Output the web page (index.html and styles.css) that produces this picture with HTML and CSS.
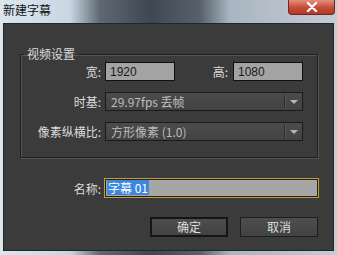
FILE: index.html
```html
<!DOCTYPE html>
<html lang="zh-CN">
<head>
  <meta charset="UTF-8">
  <title>新建字幕</title>
  <link rel="stylesheet" href="styles.css">
</head>
<body>
  <div class="titlebar">
    <span class="title">新建字幕</span>
    <button class="close">
      <svg width="12" height="10" viewBox="0 0 12 10">
        <path d="M2 1 L10 9 M10 1 L2 9" stroke="#fff" stroke-width="2.4" stroke-linecap="round"/>
      </svg>
    </button>
  </div>
  <div class="client">
    <fieldset class="group">
      <legend>视频设置</legend>
      <div class="row">
        <label class="label">宽:</label>
        <input class="field small" type="text" value="1920">
        <label class="label short">高:</label>
        <input class="field small" type="text" value="1080">
      </div>
      <div class="row">
        <label class="label">时基:</label>
        <div class="select">
          <span class="select-text">29.97fps 丢帧</span>
          <span class="select-arrow"></span>
        </div>
      </div>
      <div class="row">
        <label class="label">像素纵横比:</label>
        <div class="select">
          <span class="select-text">方形像素 (1.0)</span>
          <span class="select-arrow"></span>
        </div>
      </div>
    </fieldset>
    <div class="row name-row">
      <label class="label">名称:</label>
      <div class="field name"><span class="selected">字幕 01</span></div>
    </div>
    <div class="buttons">
      <button class="btn default">确定</button>
      <button class="btn">取消</button>
    </div>
  </div>
</body>
</html>
```

FILE: styles.css
```css
body {
  margin: 0;
  width: 337px;
  height: 255px;
  overflow: hidden;
  font-family: "Noto Sans CJK SC", "Liberation Sans", sans-serif;
  font-size: 12px;
  background: linear-gradient(90deg, #dbe6ef 0px, #c9d6e2 70px, #5d6872 100px, #3e4852 150px, #56616b 200px, #a9b5c0 230px, #c4cdd6 337px);
}

.titlebar {
  height: 23px;
  display: flex;
  justify-content: space-between;
  align-items: flex-start;
}

.title {
  margin: 2px 0 0 3px;
  color: #111;
  font-size: 12px;
  line-height: 16px;
}

.close {
  width: 47px;
  height: 15px;
  margin-right: 2px;
  padding: 0;
  border: 1px solid #6c2a22;
  border-top: none;
  border-radius: 0 0 4px 4px;
  background: linear-gradient(#e5907f, #c7503a 50%, #b33a25);
  display: flex;
  align-items: center;
  justify-content: center;
}

.client {
  margin: 0 3px;
  height: 228px;
  box-sizing: border-box;
  background: #3b3b3b;
  border: 1px solid #262626;
  color: #dcdcdc;
}

.group {
  margin: 23px 15px 0 16px;
  padding: 0 0 16px 0;
  border: 1px solid #1f1f1f;
  box-shadow: 1px 1px 0 #555, inset 1px 1px 0 #555;
}

.group legend {
  margin-left: 3px;
  padding: 0 3px;
  font-size: 12px;
  line-height: 14px;
  color: #dcdcdc;
}

.row {
  display: flex;
  align-items: center;
  height: 19px;
  margin-top: 11px;
}

.group .row:first-of-type {
  margin-top: 1px;
}

.label {
  width: 80px;
  margin-right: 4px;
  text-align: right;
  white-space: nowrap;
}

.label.short {
  width: 53px;
  margin-right: 5px;
}

.field {
  box-sizing: border-box;
  height: 19px;
  padding: 0 4px;
  border: 1px solid #111;
  background: #a3a3a3;
  color: #1a1a1a;
  font-family: "Liberation Sans", sans-serif;
  font-size: 12px;
  outline: none;
}

.field.small {
  width: 70px;
}

.select {
  box-sizing: border-box;
  width: 198px;
  height: 19px;
  border: 1px solid #1a1a1a;
  background: linear-gradient(#4b4b4b, #434343);
  display: flex;
  align-items: center;
}

.select-text {
  flex: 1;
  padding-left: 5px;
  color: #bdbdbd;
  font-size: 12px;
}

.select-arrow {
  width: 17px;
  height: 13px;
  border-left: 1px solid #2a2a2a;
  box-shadow: inset 1px 0 0 #5a5a5a;
  position: relative;
}

.select-arrow::after {
  content: "";
  position: absolute;
  left: 5px;
  top: 5px;
  border-left: 4px solid transparent;
  border-right: 4px solid transparent;
  border-top: 4px solid #b5b5b5;
}

.name-row {
  margin-top: 20px;
  padding-left: 17px;
  height: 20px;
}

.name-row .label {
  width: 80px;
  margin-right: 3px;
}

.field.name {
  width: 215px;
  height: 20px;
  padding: 1px 2px;
  border: 1px solid #c99a2e;
  box-shadow: inset 0 0 0 1px #222;
  background: #a6a6a6;
  line-height: 16px;
}

.selected {
  display: inline-block;
  padding: 0 1px;
  background: #3b88e0;
  color: #fff;
  font-family: "Noto Sans CJK SC", "Liberation Sans", sans-serif;
  line-height: 15px;
}

.buttons {
  display: flex;
  gap: 12px;
  margin: 19px 0 0 146px;
}

.btn {
  width: 78px;
  height: 20px;
  padding: 0;
  border: 1px solid #1e1e1e;
  background: linear-gradient(#4e4e4e, #424242);
  color: #dedede;
  font-family: "Noto Sans CJK SC", sans-serif;
  font-size: 12px;
  line-height: 16px;
}

.btn.default {
  border: 2px solid #151515;
}
```
